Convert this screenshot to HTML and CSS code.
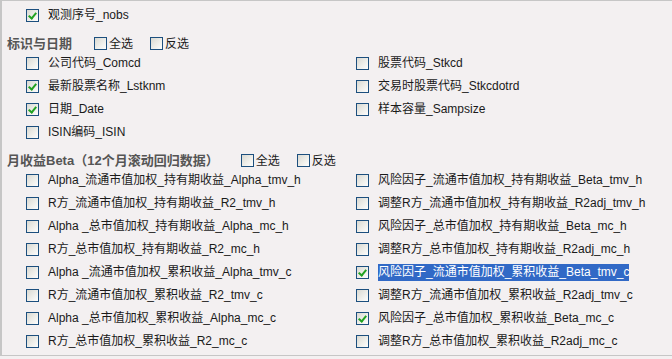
FILE: index.html
```html
<!DOCTYPE html>
<html lang="zh-CN">
<head>
  <meta charset="UTF-8" />
  <title>字段选择</title>
  <link rel="stylesheet" href="styles.css">
</head>
<body>

<div class="panel">
  <div class="row single">
    <label class="item"><span class="cb on"></span>观测序号_nobs</label>
  </div>

  <div class="head">
    <span class="title">标识与日期</span>
    <label class="opt"><span class="cb"></span>全选</label>
    <label class="opt"><span class="cb"></span>反选</label>
  </div>
  <div class="grid">
    <label class="item"><span class="cb"></span>公司代码_Comcd</label>
    <label class="item"><span class="cb"></span>股票代码_Stkcd</label>
    <label class="item"><span class="cb on"></span>最新股票名称_Lstknm</label>
    <label class="item"><span class="cb"></span>交易时股票代码_Stkcdotrd</label>
    <label class="item"><span class="cb on"></span>日期_Date</label>
    <label class="item"><span class="cb"></span>样本容量_Sampsize</label>
    <label class="item"><span class="cb"></span>ISIN编码_ISIN</label>
  </div>

  <div class="head">
    <span class="title">月收益Beta（12个月滚动回归数据）</span>
    <label class="opt"><span class="cb"></span>全选</label>
    <label class="opt"><span class="cb"></span>反选</label>
  </div>
  <div class="grid">
    <label class="item"><span class="cb"></span>Alpha_流通市值加权_持有期收益_Alpha_tmv_h</label>
    <label class="item"><span class="cb"></span>风险因子_流通市值加权_持有期收益_Beta_tmv_h</label>
    <label class="item"><span class="cb"></span>R方_流通市值加权_持有期收益_R2_tmv_h</label>
    <label class="item"><span class="cb"></span>调整R方_流通市值加权_持有期收益_R2adj_tmv_h</label>
    <label class="item"><span class="cb"></span>Alpha _总市值加权_持有期收益_Alpha_mc_h</label>
    <label class="item"><span class="cb"></span>风险因子_总市值加权_持有期收益_Beta_mc_h</label>
    <label class="item"><span class="cb"></span>R方_总市值加权_持有期收益_R2_mc_h</label>
    <label class="item"><span class="cb"></span>调整R方_总市值加权_持有期收益_R2adj_mc_h</label>
    <label class="item"><span class="cb"></span>Alpha _流通市值加权_累积收益_Alpha_tmv_c</label>
    <label class="item"><span class="cb on"></span><span class="sel">风险因子_流通市值加权_累积收益_Beta_tmv_c</span></label>
    <label class="item"><span class="cb"></span>R方_流通市值加权_累积收益_R2_tmv_c</label>
    <label class="item"><span class="cb"></span>调整R方_流通市值加权_累积收益_R2adj_tmv_c</label>
    <label class="item"><span class="cb"></span>Alpha _总市值加权_累积收益_Alpha_mc_c</label>
    <label class="item"><span class="cb on"></span>风险因子_总市值加权_累积收益_Beta_mc_c</label>
    <label class="item"><span class="cb"></span>R方_总市值加权_累积收益_R2_mc_c</label>
    <label class="item"><span class="cb"></span>调整R方_总市值加权_累积收益_R2adj_mc_c</label>
  </div>
</div>

</body>
</html>
```

FILE: styles.css
```css
body {
  margin: 0;
  background: #f3f0f1;
  font-family: "Liberation Sans", "Noto Sans CJK SC", sans-serif;
  font-size: 12px;
  color: #1a1a1a;
  overflow: hidden;
}

.panel {
  width: 700px;
  height: 356px;
  box-sizing: border-box;
  border-top: 1px solid #c6c6c6;
  border-left: 2px solid #c6c6c6;
  border-bottom: 1px solid #c6c6c6;
  padding-top: 3px;
}

.row.single {
  padding-left: 24px;
}

.grid {
  display: grid;
  grid-template-columns: 330px 1fr;
  grid-auto-rows: 23px;
  padding-left: 24px;
}

.item {
  display: flex;
  align-items: center;
  gap: 9px;
  height: 23px;
  line-height: 15px;
  white-space: nowrap;
}

.head {
  display: flex;
  align-items: center;
  height: 25px;
  box-sizing: border-box;
  padding: 8px 0 0 5px;
  line-height: 16px;
}

.head .title {
  font-weight: bold;
  font-size: 13px;
  color: #555;
  margin-right: 22px;
}

.opt {
  display: flex;
  align-items: center;
  gap: 2px;
  margin-right: 17px;
  white-space: nowrap;
}

.cb {
  position: relative;
  flex: none;
  width: 13px;
  height: 13px;
  box-sizing: border-box;
  border: 1px solid #1c4f7e;
  background: linear-gradient(135deg, #d9d9d2 0%, #f0f0ec 60%, #fdfdfd 100%);
}

.cb.on::after {
  content: "";
  position: absolute;
  left: 3px;
  top: 1px;
  width: 3px;
  height: 6px;
  border: solid #21a221;
  border-width: 0 2px 2px 0;
  transform: rotate(40deg);
}

.sel {
  background: #3169c6;
  color: #fff;
  padding: 1px 0;
}
```
